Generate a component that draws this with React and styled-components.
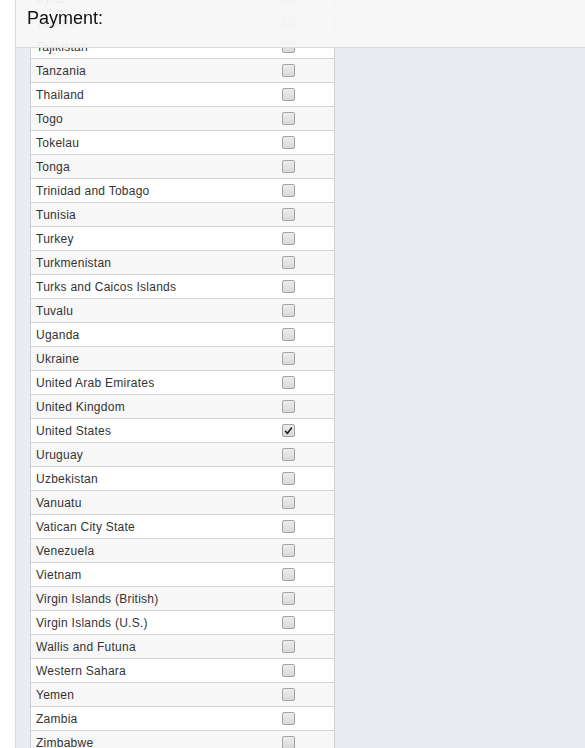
import React from 'react';
import styled, { createGlobalStyle } from 'styled-components';

const countries = [
  'Syria', 'Taiwan', 'Tajikistan', 'Tanzania', 'Thailand', 'Togo', 'Tokelau', 'Tonga',
  'Trinidad and Tobago', 'Tunisia', 'Turkey', 'Turkmenistan', 'Turks and Caicos Islands',
  'Tuvalu', 'Uganda', 'Ukraine', 'United Arab Emirates', 'United Kingdom', 'United States',
  'Uruguay', 'Uzbekistan', 'Vanuatu', 'Vatican City State', 'Venezuela', 'Vietnam',
  'Virgin Islands (British)', 'Virgin Islands (U.S.)', 'Wallis and Futuna', 'Western Sahara',
  'Yemen', 'Zambia', 'Zimbabwe',
];

const GlobalStyle = createGlobalStyle`
  html, body {
    margin: 0;
    padding: 0;
    height: 100%;
    overflow: hidden;
    background: #fff;
    font-family: Arial, "Liberation Sans", sans-serif;
  }
`;

const Page = styled.div`
  display: flex;
  height: 748px;
  overflow: hidden;
`;

const Gutter = styled.div`
  width: 15px;
  flex-shrink: 0;
  background: #fff;
  border-right: 1px solid #d8d8de;
`;

const Main = styled.div`
  flex: 1;
  background: #ebebf4;
  padding: 0 14px;
  overflow: hidden;
`;

const Header = styled.div`
  position: fixed;
  top: 0;
  left: 16px;
  right: 0;
  height: 48px;
  background: rgba(246, 246, 246, 0.94);
  border-bottom: 1px solid #dcdcdc;
  box-sizing: border-box;
  padding: 8px 0 0 11px;
  font-size: 18px;
  color: #111;
`;

const Table = styled.div`
  width: 305px;
  margin-top: -14px;
  border-left: 1px solid #cfcfcf;
  border-right: 1px solid #cfcfcf;
  box-sizing: border-box;
`;

const Row = styled.div`
  display: grid;
  grid-template-columns: 1fr 52px;
  align-items: center;
  height: 24px;
  box-sizing: border-box;
  border-top: 1px solid #d6d6d6;
  background: ${p => (p.$odd ? '#f7f7f7' : '#fff')};
  font-size: 12px;
  letter-spacing: 0.25px;
  color: #333;
`;

const Name = styled.span`
  padding-left: 5px;
  white-space: nowrap;
`;

const Box = styled.span`
  width: 13px;
  height: 13px;
  box-sizing: border-box;
  border: 1px solid #a4a4a4;
  border-radius: 2px;
  background: linear-gradient(#eeeeee, #d8d8d8);
  display: flex;
  align-items: center;
  justify-content: center;

  svg {
    width: 9px;
    height: 9px;
  }
`;

const Check = () => (
  <svg viewBox="0 0 10 10">
    <path d="M1.2 5.4 L3.8 8 L8.8 1.6" fill="none" stroke="#222" strokeWidth="1.8" />
  </svg>
);

const App = () => (
  <>
    <GlobalStyle />
    <Page>
      <Gutter />
      <Main>
        <Table>
          {countries.map((c, i) => (
            <Row key={c} $odd={i % 2 === 1}>
              <Name>{c}</Name>
              <Box>{c === 'United States' && <Check />}</Box>
            </Row>
          ))}
        </Table>
      </Main>
      <Header>Payment:</Header>
    </Page>
  </>
);

export default App;
